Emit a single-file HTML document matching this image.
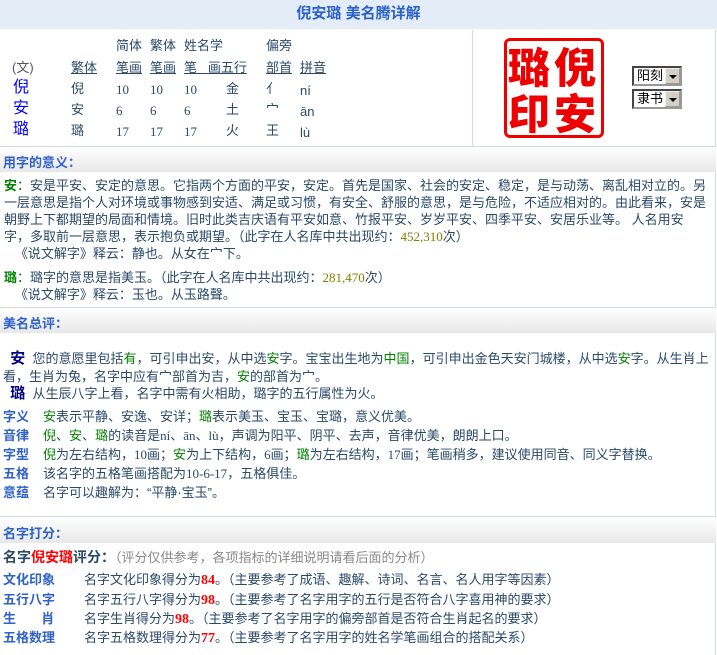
<!DOCTYPE html>
<html><head><meta charset="utf-8">
<style>
*{margin:0;padding:0;box-sizing:border-box}
body{width:717px;height:655px;background:#fff;position:relative;overflow:hidden;font-family:"Liberation Sans","Noto Sans CJK SC",sans-serif;font-size:13px;color:#2a4a68}
.a{position:absolute;white-space:nowrap;line-height:17px}
.hd{position:absolute;left:0;width:716px;background:linear-gradient(#fff,#e8e8e8);border-top:1px solid #cfdbe6}
.ht{position:absolute;left:4px;font-weight:bold;color:#2f62c8;font-size:13px}
.g{color:#008000}.b{color:#0000ff}.n{color:#808000;font-family:"Liberation Serif",serif}
.u{text-decoration:underline}
.r{color:#f00;font-family:"Liberation Serif",serif;font-weight:bold;font-size:14px}
.lb{color:#2f62c8;font-weight:bold;display:inline-block;width:40px}
.lb2{color:#2f62c8;font-weight:bold;display:inline-block;width:81px}
.dk{color:#000080;font-weight:bold;font-size:15px}
.sel{position:absolute;left:632px;width:50px;height:20px;border:2px inset #999;background:#fff;font-size:13px;color:#000;padding-left:3px;line-height:16px}
.sel i{position:absolute;right:0;top:0;width:15px;height:16px;background:#d4d0c8;border:1px outset #eee}
.sel i:after{content:"";position:absolute;left:3px;top:6px;border:4px solid transparent;border-top:4px solid #000}
.seal{position:absolute;font-size:42px;font-weight:900;color:#e00;font-family:"Noto Sans CJK SC",sans-serif;line-height:44px}
.t{font-family:"Liberation Serif",serif}
</style></head><body>
<div style="position:absolute;left:0;top:0;width:717px;height:29px;background:#e4ecf8"></div>
<div class="a" style="left:0;width:717px;text-align:center;top:5px;font-size:15px;font-weight:bold;color:#2a62c8">倪安璐 美名腾详解</div>
<div style="position:absolute;left:472px;top:30px;width:1px;height:116px;background:#d0dce8"></div>
<div style="position:absolute;left:715px;top:30px;width:1px;height:625px;background:#d0dce8"></div>

<div class="a" style="left:116px;top:37px">简体</div><div class="a" style="left:150px;top:37px">繁体</div><div class="a" style="left:184px;top:37px">姓名学</div>
<div class="a" style="left:266px;top:37px">偏旁</div>
<div class="a" style="left:12px;top:59px;color:#556">(文)</div>
<div class="a u" style="left:71px;top:59px">繁体</div>
<div class="a u" style="left:116px;top:59px">笔画</div>
<div class="a u" style="left:150px;top:59px">笔画</div>
<div class="a u" style="left:184px;top:59px">笔&nbsp;&nbsp;&nbsp;画五行</div>
<div class="a u" style="left:266px;top:59px">部首</div>
<div class="a u" style="left:300px;top:59px">拼音</div>
<div class="a b" style="left:13px;top:79px;font-size:16px">倪</div>
<div class="a b" style="left:13px;top:100px;font-size:16px">安</div>
<div class="a b" style="left:13px;top:121px;font-size:16px">璐</div>
<div class="a" style="left:71px;top:80px">倪</div><div class="a" style="left:71px;top:101px">安</div><div class="a" style="left:71px;top:122px">璐</div>
<div class="a t" style="left:116px;top:81px">10</div><div class="a t" style="left:150px;top:81px">10</div><div class="a t" style="left:184px;top:81px">10</div>
<div class="a t" style="left:116px;top:102px">6</div><div class="a t" style="left:150px;top:102px">6</div><div class="a t" style="left:184px;top:102px">6</div>
<div class="a t" style="left:116px;top:123px">17</div><div class="a t" style="left:150px;top:123px">17</div><div class="a t" style="left:184px;top:123px">17</div>
<div class="a" style="left:226px;top:80px">金</div><div class="a" style="left:226px;top:101px">土</div><div class="a" style="left:226px;top:122px">火</div>
<div class="a" style="left:266px;top:80px">亻</div><div class="a" style="left:266px;top:101px">宀</div><div class="a" style="left:266px;top:122px">王</div>
<div class="a" style="left:300px;top:82px">ní</div><div class="a" style="left:300px;top:103px">ān</div><div class="a" style="left:300px;top:124px">lù</div>

<div style="position:absolute;left:504px;top:38px;width:100px;height:100px;border:3px solid #e00;border-radius:6px"></div>
<div class="seal" style="left:554px;top:44px">倪</div>
<div class="seal" style="left:508px;top:44px">璐</div>
<div class="seal" style="left:554px;top:90px">安</div>
<div class="seal" style="left:508px;top:90px">印</div>
<div class="sel" style="top:66px">阳刻<i></i></div>
<div class="sel" style="top:89px">隶书<i></i></div>

<div class="hd" style="top:146px;height:26px"></div>
<div class="ht" style="top:152px;left:3px">用字的意义：</div>
<div class="a" style="left:4px;top:177px;line-height:17px"><b class="g">安</b>：安是平安、安定的意思。它指两个方面的平安，安定。首先是国家、社会的安定、稳定，是与动荡、离乱相对立的。另<br>一层意思是指个人对环境或事物感到安适、满足或习惯，有安全、舒服的意思，是与危险，不适应相对的。由此看来，安是<br>朝野上下都期望的局面和情境。旧时此类吉庆语有平安如意、竹报平安、岁岁平安、四季平安、安居乐业等。 人名用安<br>字，多取前一层意思，表示抱负或期望。（此字在人名库中共出现约：<span class="n">452,310</span>次）<br>&nbsp;&nbsp;&nbsp;《说文解字》释云：静也。从女在宀下。</div>
<div class="a" style="left:4px;top:269px;line-height:17px"><b class="g">璐</b>：璐字的意思是指美玉。（此字在人名库中共出现约：<span class="n">281,470</span>次）<br>&nbsp;&nbsp;&nbsp;《说文解字》释云：玉也。从玉路聲。</div>

<div class="hd" style="top:307px;height:26px"></div>
<div class="ht" style="top:313px;left:3px">美名总评：</div>
<div class="a" style="left:3px;top:350px;line-height:18px">&nbsp;&nbsp;<span class="dk">安</span>&nbsp;&nbsp;您的意愿里包括<span class="g">有</span>，可引申出安，从中选<span class="g">安</span>字。宝宝出生地为<span class="g">中国</span>，可引申出金色天安门城楼，从中选<span class="g">安</span>字。从生肖上<br>看，生肖为兔，名字中应有宀部首为吉，<span class="g">安</span>的部首为宀。</div>
<div class="a" style="left:3px;top:385px">&nbsp;&nbsp;<span class="dk">璐</span>&nbsp;&nbsp;从生辰八字上看，名字中需有火相助，璐字的五行属性为火。</div>
<div class="a" style="left:3px;top:408px"><span class="lb">字义</span><span class="g">安</span>表示平静、安逸、安详；<span class="g">璐</span>表示美玉、宝玉、宝璐，意义优美。</div>
<div class="a" style="left:3px;top:427px"><span class="lb">音律</span><span class="g">倪</span>、<span class="g">安</span>、<span class="g">璐</span>的读音是<span class="t">ní、ān、lù</span>，声调为阳平、阴平、去声，音律优美，朗朗上口。</div>
<div class="a" style="left:3px;top:446px"><span class="lb">字型</span><span class="g">倪</span>为左右结构，<span class="t">10</span>画；<span class="g">安</span>为上下结构，<span class="t">6</span>画；<span class="g">璐</span>为左右结构，<span class="t">17</span>画；笔画稍多，建议使用同音、同义字替换。</div>
<div class="a" style="left:3px;top:465px"><span class="lb">五格</span>该名字的五格笔画搭配为<span class="t">10-6-17</span>，五格俱佳。</div>
<div class="a" style="left:3px;top:484px"><span class="lb">意蕴</span>名字可以趣解为：“平静·宝玉”。</div>

<div class="hd" style="top:516px;height:27px"></div>
<div class="ht" style="top:523px;left:3px">名字打分：</div>
<div class="a" style="left:3px;top:549px"><b style="font-size:14px">名字<span style="color:#f00">倪安璐</span>评分：</b><span style="color:#888">（评分仅供参考，各项指标的详细说明请看后面的分析）</span></div>
<div class="a" style="left:3px;top:571px"><span class="lb2">文化印象</span>名字文化印象得分为<span class="r">84</span>。（主要参考了成语、趣解、诗词、名言、名人用字等因素）</div>
<div class="a" style="left:3px;top:591px"><span class="lb2">五行八字</span>名字五行八字得分为<span class="r">98</span>。（主要参考了名字用字的五行是否符合八字喜用神的要求）</div>
<div class="a" style="left:3px;top:610px"><span class="lb2">生&nbsp;&nbsp;&nbsp;&nbsp;&nbsp;&nbsp;&nbsp;肖</span>名字生肖得分为<span class="r">98</span>。（主要参考了名字用字的偏旁部首是否符合生肖起名的要求）</div>
<div class="a" style="left:3px;top:629px"><span class="lb2">五格数理</span>名字五格数理得分为<span class="r">77</span>。（主要参考了名字用字的姓名学笔画组合的搭配关系）</div>
</body></html>
